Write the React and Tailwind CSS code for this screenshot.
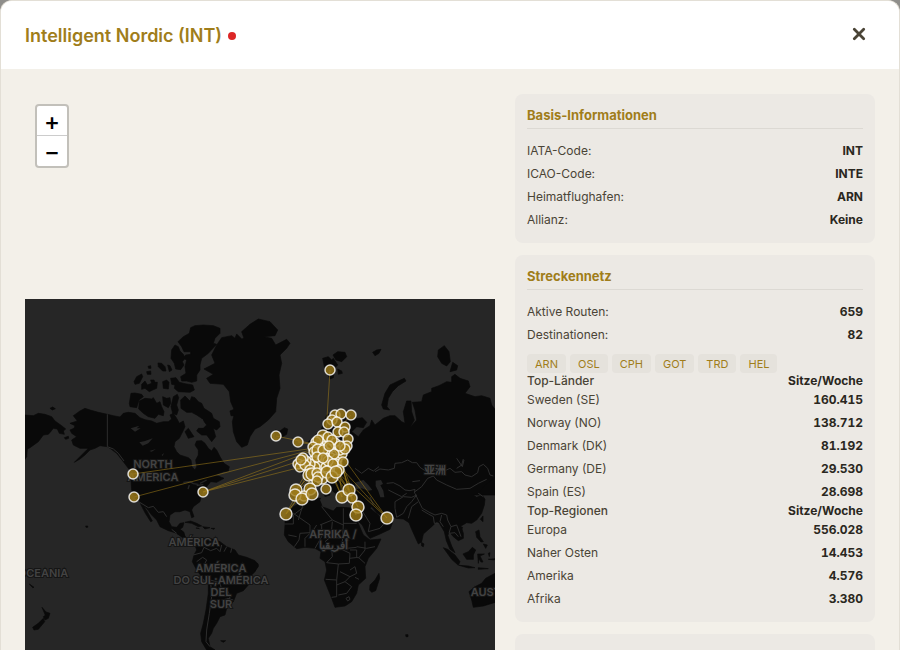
const basics = [
  ["IATA-Code:", "INT"],
  ["ICAO-Code:", "INTE"],
  ["Heimatflughafen:", "ARN"],
  ["Allianz:", "Keine"],
];
const network = [
  ["Aktive Routen:", "659"],
  ["Destinationen:", "82"],
];
const hubs = ["ARN", "OSL", "CPH", "GOT", "TRD", "HEL"];
const countries = [
  ["Sweden (SE)", "160.415"],
  ["Norway (NO)", "138.712"],
  ["Denmark (DK)", "81.192"],
  ["Germany (DE)", "29.530"],
  ["Spain (ES)", "28.698"],
];
const regions = [
  ["Europa", "556.028"],
  ["Naher Osten", "14.453"],
  ["Amerika", "4.576"],
  ["Afrika", "3.380"],
];

// Land masses, in thirds of a map pixel; each list belongs to one quadrant of the map.
const northWest = [
  "M10 360L40 362 55 355 75 358 95 365 105 378 125 392 137 402 130 408 133 418 118 415 112 402 100 400 92 410 85 418 70 420 55 440 30 458 22 462 20 485 10 500Z",
  "M90 340L98 336 106 341 97 345Z",
  "M133 428L145 424 146 430 137 433Z",
  "M160 362L180 348 195 340 210 345 235 352 262 358 280 362 300 366 310 355 325 352 345 355 360 368 375 374 395 378 410 385 430 380 445 380 455 372 450 360 460 355 470 370 478 385 490 378 495 395 488 410 478 430 465 440 462 455 470 470 480 480 505 488 513 495 516 515 525 525 530 515 527 495 535 480 535 465 525 450 530 438 545 437 555 445 565 460 575 468 582 457 590 465 600 485 612 505 628 515 625 528 610 530 585 540 600 545 612 550 590 562 572 560 560 575 545 598 540 620 520 635 515 645 522 665 515 668 510 650 495 645 480 650 465 650 450 660 447 680 455 695 470 697 480 685 492 683 488 697 480 703 492 712 495 725 505 732 520 730 525 740 510 742 500 732 480 720 465 713 445 707 420 695 410 675 395 660 380 640 365 628 345 610 335 585 333 555 335 530 325 520 310 500 290 475 270 460 262 455 240 452 225 460 210 465 195 480 180 492 163 502 180 485 200 465 205 460 180 460 160 450 155 435 170 425 155 415 150 405 162 400 165 392 150 385 172 378Z",
  "M362 628L370 632 382 650 397 678 392 680 376 655Z",
  "M474 140L490 125 508 115 512 98 525 92 550 90 580 92 600 100 600 115 585 130 580 145 590 148 565 175 545 190 540 210 540 225 530 240 530 258 515 262 500 258 485 258 482 245 498 235 495 215 500 195 490 190 497 180 512 178 512 170 492 170 485 155Z",
  "M455 165L465 150 475 155 480 168 490 178 495 190 487 200 492 210 482 224 467 222 463 205 453 190Z",
  "M414 204L425 205 435 215 438 228 428 228 415 215Z",
  "M443 210L450 212 456 225 448 230Z",
  "M384 214L392 212 393 220 386 220Z M380 230L392 228 393 238 382 238Z",
  "M342 260L350 245 365 237 368 245 358 265 345 268Z",
  "M365 268L375 258 382 270 395 265 392 255 402 255 405 262 412 262 410 280 398 285 388 290 375 280 365 283Z",
  "M428 260L440 255 447 262 445 282 430 280Z",
  "M452 250L468 248 478 262 495 266 518 270 523 285 510 292 475 290 463 280 465 270 455 268Z",
  "M333 295L345 294 365 298 370 305 357 315 350 338 330 335 328 325Z",
  "M358 318L375 310 395 312 400 308 410 325 420 320 425 335 432 350 430 362 415 358 405 370 385 365 370 355 356 342Z",
  "M428 305L440 310 450 308 452 325 445 338 430 330Z",
  "M460 305L472 298 476 308 470 330 475 345 470 360 458 355 453 335Z",
  "M482 315L495 303 510 318 515 305 525 308 535 320 545 325 552 340 575 355 580 370 598 380 600 395 590 405 580 400 587 425 575 440 560 420 545 420 530 408 535 400 550 400 560 390 545 370 530 360 515 352 500 352 483 340Z",
  "M495 410L505 400 515 415 522 425 505 430Z",
  "M552 222L585 205 575 180 590 150 605 128 635 122 645 130 650 117 665 132 672 130 665 110 690 88 715 72 750 80 773 105 765 122 730 125 755 130 767 150 800 133 810 145 800 160 780 180 785 205 777 240 780 280 770 310 767 350 745 375 720 395 705 402 690 425 682 450 665 457 650 440 640 410 637 380 645 350 632 320 628 290 610 268 570 265 560 250 580 238Z",
  "M630 348L645 342 643 362 633 362Z",
];
const northWestWater = [
  "M332 400L345 396 358 392 350 400 362 400 345 410Z",
  "M358 442L375 438 398 430 385 445 368 452Z",
  "M388 468L408 462 395 470Z",
  "M425 480L432 474 428 483Z",
  "M533 375L548 372 552 385 540 395Z",
];
const southWest = [
  "M470 190L485 182 492 196 500 205 520 207 530 218 545 205 570 205 600 215 620 230 645 240 655 255 680 262 705 272 715 285 705 305 690 320 685 345 670 362 650 370 640 395 620 415 615 435 600 440 590 460 580 475 575 490 565 505 570 530 585 540 560 540 545 515 542 490 550 460 558 420 565 370 565 340 545 320 530 300 517 275 522 255 530 240 524 222 500 212Z",
  "M495 157L512 153 530 160 545 168 535 170 515 160Z M548 170L570 173 555 177Z M573 175L584 175 582 178Z M528 174L538 176Z",
  "M66 412L78 426 90 430 85 445 75 450 70 440 76 436Z",
  "M70 445L74 455 55 478 42 480 38 472 55 460Z",
  "M28 342L42 352 38 353Z M197 168L203 168 203 172 198 172Z M602 512L617 512 610 517Z",
];
const northEast = [
  "M203 190L220 185 230 195 235 190 248 210 238 220 235 248 225 252 210 225Z",
  "M234 180L248 170 270 172 275 185 260 200 243 195Z",
  "M248 222L260 228 262 235 250 238Z",
  "M353 172L365 165 378 163 372 175 360 182Z",
  "M550 165L568 152 582 170 586 200 575 213 560 205 548 185Z",
  "M593 202L608 212 605 225 585 230Z",
  "M380 330L390 295 405 270 430 258 448 250 453 258 430 272 412 290 400 310 396 335 404 345 385 342Z",
  "M60 405L75 408 88 398 98 402 95 418 75 430 60 425Z",
  "M160 440L200 400 215 360 245 345 290 350 300 372 322 368 335 382 325 398 305 395 290 410 310 425 325 405 345 392 350 375 360 390 385 370 405 362 420 362 440 380 450 385 445 350 455 318 468 318 470 350 478 375 465 398 485 375 480 345 472 322 500 320 505 300 530 290 530 280 552 272 575 260 590 262 590 245 600 238 615 250 640 258 645 275 630 295 660 305 680 302 705 310 710 330 722 345 722 600 280 600 170 560Z",
];
const southEast = [
  "M280 0L722 0 722 20 705 35 690 45 672 68 655 75 665 82 682 75 690 88 688 105 680 130 665 150 650 160 635 158 618 168 625 190 625 205 610 212 595 200 585 188 578 195 590 228 600 248 585 238 574 212 568 185 552 158 545 155 530 170 505 192 500 215 490 222 480 200 470 178 462 158 445 147 422 145 400 130 385 142 365 128 350 110 345 115 370 135 385 155 412 160 405 178 375 192 345 205 335 192 322 165 303 148 308 115 280 95 262 88 262 70 300 72 345 78 340 62 300 45 280 30Z",
  "M130 0L300 0 285 60 250 75 235 65 215 45 225 75 210 80 190 40 160 50 150 85 115 85 105 55 150 50 155 30Z",
  "M90 140L115 110 145 95 180 85 200 85 200 110 215 115 235 123 245 112 262 112 300 115 302 140 312 165 325 195 345 210 378 207 365 235 340 265 330 290 332 325 310 345 305 370 290 395 270 408 240 412 230 385 220 360 208 330 215 300 210 275 195 265 198 245 180 235 150 232 125 236 100 215 88 195 90 165Z",
  "M345 345L360 330 372 310 374 325 362 362 350 367 344 360Z",
  "M724 308L705 318 692 325 680 340 660 350 642 365 650 390 655 412 685 408 724 396Z",
  "M565 233L578 238 600 255 615 275 610 286 590 268Z",
  "M612 286L640 288 660 293 640 294Z M670 293L700 296 670 298Z",
  "M624 252L640 245 652 232 662 240 655 255 655 268 635 268Z",
  "M668 252L688 252 675 258 684 276 678 276 672 266 670 280Z M700 250L705 248 703 260Z M700 268L720 266 718 270Z",
  "M662 185L672 180 675 200 685 215 678 216 665 202Z M685 222L697 225 692 235Z M676 148L684 138 684 155Z M612 174L623 172 618 182Z",
  "M499 217L507 222 505 230 500 228Z",
  "M0 278L8 280 10 290 0 302Z M452 494L459 494 459 500 453 500Z",
];
const southEastWater = [
  "M300 38L325 30 340 45 352 60 340 62 320 55 302 57Z",
  "M362 32L378 30 384 42 376 46 385 62 388 82 376 82 370 64 362 48Z",
  "M195 90L200 80 235 82 262 92 262 108 240 112 220 114 202 105Z",
];
const borders = [
  { at: "translate(20 295) scale(.333333)", d: "M262 358V455L280 462 295 475 312 498M340 610L385 638 400 634 415 652 430 650 440 665" },
  { at: "translate(20 470) scale(.333333)", d: "M455 178L470 190M520 255L545 248 552 232 572 242 590 235 600 245 605 225M620 230L612 245M635 235L632 248M530 275L548 262 560 270 552 285 575 300 590 295M570 330L600 338 605 360 625 365 630 385 605 390M572 335L575 380 568 430 560 480 558 515 570 530M640 390L622 385" },
  { at: "translate(255 295) scale(.333333)", d: "M300 520L320 535 340 520 355 528 372 515M625 492L620 510 605 520" },
  { at: "translate(255 470) scale(.333333)", d: "M88 162H115V135L145 112M115 130L165 165 165 188 135 190M145 100L130 150M195 165L232 150 200 110M232 150L265 165V115M265 160H305M170 188L185 165M200 165L200 200 180 235M232 155L228 200 210 215M265 165L262 215 275 235 305 232M165 190L150 205 150 230M135 190L132 210 118 230M100 195L125 200M225 200L260 205M200 240L230 235 232 260 215 278M230 235L260 238 285 250 283 280 250 282 215 278M283 265L310 262 330 280M285 240L305 240 305 262M310 265L330 240 330 215M305 230L335 235 360 230M212 328L245 330 250 282M245 330L245 380 230 382M245 345L270 335 285 320 255 305M270 335L290 350 275 370 250 375M285 320L305 310 300 290 285 300M300 322L312 328M273 385L282 380 285 388 278 393ZM320 120L345 160 340 185 375 175 388 160M345 80L355 105" },
  { at: "translate(375 440) scale(.333333)", d: "M0 95L15 87 40 90 58 85 60 70 80 68 98 60 112 68 125 68 135 82 150 92 160 90 210 92 225 85 240 97 260 95 270 105 290 110 308 98 312 80 325 73 338 85 345 105 355 108M35 130L55 128 75 138 90 150 105 152 120 148 118 160M40 150L60 160 80 170 95 160M60 185L85 170 110 172 125 165 110 185 95 200 85 220 65 232 60 205ZM112 125L135 122M120 155L140 140 158 115 175 108 185 120 215 135 245 148 285 145 310 130 335 118M130 185L110 200 100 235M120 160L132 185 142 205 165 218 180 225 200 220 215 225 218 240M140 210L160 222 175 230M175 230L178 250 190 250M200 225L195 245 205 260M218 240L228 260 245 255 258 290M228 260L222 280 240 278 250 290M310 160L325 170M245 55L262 80 267 60" },
];

const markers = [
  [322, 441, 6], [319, 446, 5], [327, 441, 5], [331, 447, 5], [335, 443, 5],
  [316, 455, 5], [327, 453, 5], [331, 458, 5], [337, 459, 5], [342, 454, 5],
  [313, 461, 5], [320, 465, 6], [326, 467, 5], [315, 467, 5], [336, 464, 5],
  [325, 458, 5], [310, 464, 5], [340, 450, 5], [344, 446, 5], [306, 461, 5],
  [276, 436, 5], [298, 442, 5], [335, 415, 5], [341, 414, 5], [351, 415, 5],
  [332, 420, 5], [328, 424, 5], [337, 422, 5], [345, 427, 5], [338, 432, 5],
  [344, 432, 5], [348, 439, 5], [323, 436, 6], [328, 437, 5], [316, 442, 5],
  [347, 446, 5], [345, 449, 5], [318, 440, 5], [332, 440, 5], [313, 447, 5],
  [314, 452, 5], [318, 450, 6], [323, 450, 5], [334, 454, 5], [340, 446, 5],
  [329, 446, 5], [317, 457, 5], [328, 461, 5], [323, 458, 5],
  [333, 464, 5], [343, 462, 5], [339, 470, 5], [303, 458, 5], [298, 464, 5],
  [300, 467, 5], [305, 465, 5], [301, 460, 5], [310, 470, 5], [309, 475, 6],
  [312, 474, 6], [317, 473, 5], [322, 478, 6], [318, 477, 5], [317, 481, 5],
  [327, 472, 6], [332, 477, 6], [336, 472, 6], [326, 489, 5],
  [296, 490, 6], [310, 489, 6], [304, 496, 5], [295, 495, 6], [302, 499, 6],
  [312, 494, 6], [342, 497, 6], [349, 490, 6], [352, 498, 5], [358, 507, 6],
  [356, 515, 6], [387, 518, 6], [286, 514, 6], [330, 370, 5], [133, 474, 5],
  [134, 497, 5], [203, 492, 5],
];
const hubPoints = [[337, 449], [322, 447], [325, 461], [326, 434]];
const longRoutes = [
  [276, 436, 0], [298, 442, 0], [133, 474, 1], [134, 497, 1], [203, 492, 0],
  [203, 492, 1], [203, 492, 2], [387, 518, 0], [387, 518, 1], [387, 518, 2],
  [286, 514, 0], [286, 514, 1], [286, 514, 2], [296, 490, 0], [296, 490, 1],
  [302, 499, 0], [302, 499, 1], [302, 499, 2], [295, 495, 2], [312, 494, 0],
  [342, 497, 0], [342, 497, 1], [342, 497, 2], [349, 490, 1], [352, 498, 0],
  [358, 507, 0], [358, 507, 1], [358, 507, 2], [356, 515, 0], [356, 515, 1],
  [330, 370, 3], [345, 427, 1], [351, 415, 1], [343, 462, 1],
  [304, 496, 1], [349, 490, 0], [349, 490, 2], [310, 489, 0], [310, 489, 1],
];
const labels = [
  [153, 468, "NORTH"], [153, 481, "AMERICA"], [194, 546, "AMÉRICA"],
  [221, 572, "AMÉRICA"], [221, 584, "DO SUL;AMÉRICA"], [221, 596, "DEL"],
  [221, 608, "SUR"], [43, 577, "OCEANIA"], [333, 538, "AFRIKA /"],
  [333, 549, "أفريقيا"], [435, 474, "亚洲"], [502, 596, "AUSTRALIA"],
];

function Land({ at, land, water = [] }) {
  return (
    <g transform={at}>
      <path d={land.join("")} fill="#090909" stroke="#090909" strokeWidth="2" strokeLinejoin="round" />
      <path d={water.join("")} fill="#262626" />
    </g>
  );
}

function RouteMap() {
  return (
    <svg viewBox="25 299 470 395" className="block w-full bg-[#262626]" role="img" aria-label="Streckenkarte">
      <Land at="translate(20 295) scale(.333333)" land={northWest} water={northWestWater} />
      <g transform="translate(20 295) scale(.333333)" fill="none" stroke="#262626" strokeWidth="4">
        <path d="M490 562L510 560 520 566 535 568M508 570L504 582M530 572L550 568M540 565L560 555" />
      </g>
      <Land at="translate(20 470) scale(.333333)" land={southWest} />
      <Land at="translate(255 295) scale(.333333)" land={northEast} />
      <Land at="translate(255 470) scale(.333333)" land={southEast} water={southEastWater} />
      {borders.map((b) => (
        <path key={b.at} transform={b.at} d={b.d} fill="none" stroke="#2d2d2d" strokeWidth="3" strokeLinejoin="round" />
      ))}
      <g className="font-['Inter','Noto_Sans_CJK_SC',sans-serif] text-[11px] font-semibold" fill="#434343" stroke="#151515" strokeWidth="2" paintOrder="stroke" textAnchor="middle">
        {labels.map(([x, y, text]) => (
          <text key={`${x}-${y}`} x={x} y={y}>{text}</text>
        ))}
      </g>
      <g stroke="#a07d1a" strokeOpacity="0.55" strokeWidth="1">
        {longRoutes.map(([x, y, hub], i) => (
          <line key={i} x1={x} y1={y} x2={hubPoints[hub][0]} y2={hubPoints[hub][1]} />
        ))}
      </g>
      <g fill="#a07d1a" fillOpacity="0.8" stroke="#ffffff" strokeOpacity="0.8" strokeWidth="1.5">
        {markers.map(([x, y, r], i) => (
          <circle key={i} cx={x} cy={y} r={r} />
        ))}
      </g>
    </svg>
  );
}

function Card({ title, children }) {
  return (
    <section className="rounded-lg bg-[#ece9e4] p-3">
      <h3 className="mb-2.5 border-b border-[#dcd9d3] pb-1 text-[13px] leading-[18px] font-bold text-[#a07d1a]">{title}</h3>
      {children}
    </section>
  );
}

function Rows({ items }) {
  return (
    <dl>
      {items.map(([label, value]) => (
        <div key={label} className="flex justify-between py-1">
          <dt>{label}</dt>
          <dd className="font-bold text-[#2a2720] tabular-nums">{value}</dd>
        </div>
      ))}
    </dl>
  );
}

function ListHead({ label }) {
  return (
    <div className="flex justify-between">
      <span className="font-medium">{label}</span>
      <span className="font-bold text-[#2a2720]">Sitze/Woche</span>
    </div>
  );
}

export default function App() {
  return (
    <div className="h-screen overflow-hidden bg-[#8f8e8b] font-['Inter',sans-serif]">
      <div role="dialog" aria-labelledby="airline" className="flex h-full flex-col overflow-hidden rounded-t-xl border border-b-0 border-[#e3dfd6] bg-[#f3f0e9]">
        <header className="flex h-17 shrink-0 items-start justify-between bg-white px-6 pt-4">
          <h2 id="airline" className="flex h-9 items-center gap-1.5 pt-0.5 text-lg font-semibold text-[#a07d1a]">
            Intelligent Nordic (INT)
            <span className="size-2 rounded-full bg-[#dc2626]" />
          </h2>
          <button type="button" aria-label="Schließen" className="flex size-8 items-center justify-center pt-0.5 text-[#4a4436]">
            <svg viewBox="0 0 14 14" className="size-3.5" fill="none" stroke="currentColor" strokeWidth="2.8" strokeLinecap="round">
              <path d="M2.3 2.3l9.4 9.4M11.7 2.3l-9.4 9.4" />
            </svg>
          </button>
        </header>
        <main className="grid min-h-0 flex-1 grid-cols-[minmax(0,1fr)_360px] gap-5 overflow-hidden px-6 pt-[25px]">
          <div className="relative pt-[205px]">
            <RouteMap />
            <div className="absolute top-2.5 left-2.5 flex flex-col overflow-hidden rounded border-2 border-black/20 bg-white bg-clip-padding text-2xl font-medium text-black">
              <button type="button" aria-label="Vergrößern" className="flex size-[30px] items-center justify-center border-b border-[#ccc] pt-0.5 leading-none">+</button>
              <button type="button" aria-label="Verkleinern" className="flex size-[30px] items-center justify-center pt-0.5 leading-none">−</button>
            </div>
          </div>
          <div className="flex flex-col gap-3 text-xs leading-[15px] text-[#4a4436]">
            <Card title="Basis-Informationen">
              <Rows items={basics} />
            </Card>
            <Card title="Streckennetz">
              <Rows items={network} />
              <ul className="mt-2 flex gap-1 text-[11px] text-[#a07d1a]">
                {hubs.map((hub) => (
                  <li key={hub} className="rounded bg-[#e5e2dc] px-2 pt-[3px] pb-px">{hub}</li>
                ))}
              </ul>
              <ListHead label="Top-Länder" />
              <Rows items={countries} />
              <ListHead label="Top-Regionen" />
              <Rows items={regions} />
            </Card>
            <Card title="Flotte" />
          </div>
        </main>
      </div>
    </div>
  );
}
